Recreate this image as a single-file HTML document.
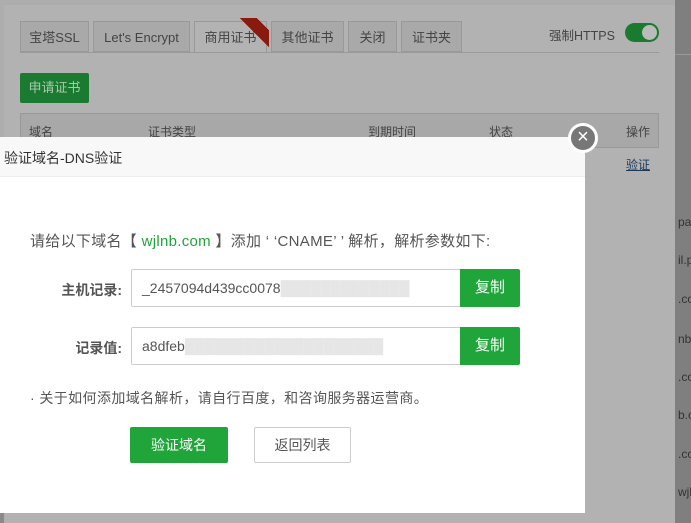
<!DOCTYPE html><html><head><meta charset="utf-8"><style>
*{margin:0;padding:0;box-sizing:border-box}
body{width:691px;height:523px;overflow:hidden;position:relative;background:#adadad;font-family:"Liberation Sans","Noto Sans CJK SC",sans-serif;font-size:12px;color:#555}
.a{position:absolute}
.tab{position:absolute;top:21px;height:31px;border:1px solid #999;background:#a9a9a9;color:#444;font-size:13px;line-height:32px;text-align:center;white-space:nowrap}
</style></head><body>
<div class="a" style="left:4px;top:5px;width:671px;height:518px;background:#b2b2b2"></div>
<div class="a" style="left:675px;top:0;width:16px;height:523px;background:#7f7f7f"></div>
<div class="a" style="left:675px;top:54px;width:16px;height:1px;background:#999"></div>
<div class="tab" style="left:20px;width:69px">宝塔SSL</div>
<div class="tab" style="left:93px;width:97px">Let's Encrypt</div>
<div class="tab" style="left:194px;width:73px;background:#b3b3b3;border-bottom:none;height:32px">商用证书</div>
<div class="a" style="left:240px;top:18px;width:29px;height:32px;background:linear-gradient(45deg,transparent 52%,#8a1a10 52%,#8a1a10 80%,transparent 80%)"></div>
<div class="tab" style="left:271px;width:73px">其他证书</div>
<div class="tab" style="left:348px;width:49px">关闭</div>
<div class="tab" style="left:401px;width:61px">证书夹</div>
<div class="a" style="left:20px;top:52px;width:639px;height:1px;background:#999"></div>
<div class="a" style="left:549px;top:25px;color:#444;font-size:12.5px">强制HTTPS</div>
<div class="a" style="left:625px;top:23px;width:34px;height:19px;border-radius:10px;background:#1a7a30"></div>
<div class="a" style="left:642px;top:25px;width:15px;height:15px;border-radius:50%;background:#bbb"></div>
<div class="a" style="left:20px;top:73px;width:69px;height:30px;background:#1a7a30;color:#aac9b0;border-radius:2px;line-height:30px;text-align:center;font-size:13px">申请证书</div>
<div class="a" style="left:20px;top:113px;width:639px;height:35px;border:1px solid #999;background:#a8a8a8"></div>
<div class="a" style="left:29px;top:123px;color:#444">域名</div>
<div class="a" style="left:148px;top:123px;color:#444">证书类型</div>
<div class="a" style="left:368px;top:123px;color:#444">到期时间</div>
<div class="a" style="left:489px;top:123px;color:#444">状态</div>
<div class="a" style="left:626px;top:123px;color:#444">操作</div>
<div class="a" style="left:626px;top:156px;color:#1b3a5a;text-decoration:underline">验证</div>
<div class="a" style="left:0;top:137px;width:585px;height:376px;background:#fff"></div>
<div class="a" style="left:0;top:137px;width:585px;height:40px;background:#f8f8f8;border-bottom:1px solid #eee;font-size:14px;color:#333;line-height:42px;padding-left:4px">验证域名-DNS验证</div>
<div class="a" style="left:568px;top:123px;width:30px;height:30px;border-radius:50%;background:#777;border:3px solid #fff;color:#fff;font-size:20px;line-height:23px;text-align:center">×</div>
<div class="a" style="left:30px;top:230px;font-size:15px;letter-spacing:0.3px;color:#555;white-space:nowrap">请给以下域名【 <span style="color:#20a53a">wjlnb.com</span> 】添加 ‘ ‘CNAME’ ’ 解析，解析参数如下:</div>
<div class="a" style="left:40px;top:280px;width:82px;text-align:right;font-size:14px;font-weight:bold;color:#555">主机记录:</div>
<div class="a" style="left:131px;top:269px;width:330px;height:38px;border:1px solid #ccc;border-radius:2px 0 0 2px;font-size:14px;line-height:36px;padding-left:10px;color:#555;overflow:hidden;white-space:nowrap">_2457094d439cc0078<span style="color:#e6e6e6">█████████████</span></div>
<div class="a" style="left:460px;top:269px;width:60px;height:38px;background:#20a53a;color:#fff;font-size:15px;line-height:38px;text-align:center;border-radius:0 2px 2px 0">复制</div>
<div class="a" style="left:40px;top:338px;width:82px;text-align:right;font-size:14px;font-weight:bold;color:#555">记录值:</div>
<div class="a" style="left:131px;top:327px;width:330px;height:38px;border:1px solid #ccc;border-radius:2px 0 0 2px;font-size:14px;line-height:36px;padding-left:10px;color:#555;overflow:hidden;white-space:nowrap">a8dfeb<span style="color:#e6e6e6">████████████████████</span></div>
<div class="a" style="left:460px;top:327px;width:60px;height:38px;background:#20a53a;color:#fff;font-size:15px;line-height:38px;text-align:center;border-radius:0 2px 2px 0">复制</div>
<div class="a" style="left:30px;top:388px;font-size:14px;letter-spacing:0.4px;color:#555;white-space:nowrap">· 关于如何添加域名解析，请自行百度，和咨询服务器运营商。</div>
<div class="a" style="left:130px;top:427px;width:98px;height:36px;background:#20a53a;color:#fff;font-size:14px;line-height:36px;text-align:center;border-radius:2px">验证域名</div>
<div class="a" style="left:254px;top:427px;width:97px;height:36px;border:1px solid #ccc;color:#555;font-size:14px;line-height:34px;text-align:center;border-radius:2px">返回列表</div>
<div class="a" style="left:0;top:513px;width:4px;height:10px;background:#8a8a8a"></div>
<div class="a" style="left:678px;top:215px;color:#333;font-size:12px">pan</div>
<div class="a" style="left:678px;top:253px;color:#333">il.p</div>
<div class="a" style="left:678px;top:292px;color:#333">.co</div>
<div class="a" style="left:678px;top:332px;color:#333">nb</div>
<div class="a" style="left:678px;top:370px;color:#333">.co</div>
<div class="a" style="left:678px;top:408px;color:#333">b.c</div>
<div class="a" style="left:678px;top:447px;color:#333">.co</div>
<div class="a" style="left:678px;top:485px;color:#333">wjl</div>
</body></html>
